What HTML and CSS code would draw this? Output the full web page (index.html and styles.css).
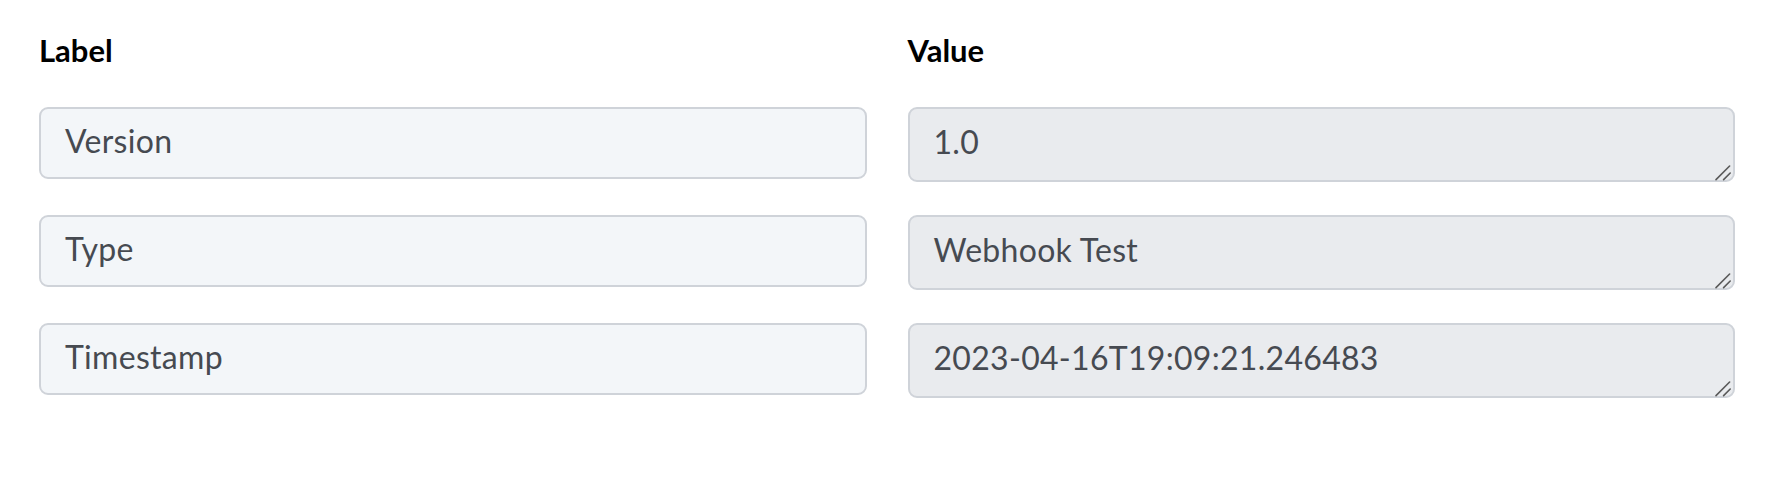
FILE: index.html
```html
<!DOCTYPE html>
<html lang="en">
<head>
<meta charset="utf-8">
<title>Label / Value</title>
<link rel="stylesheet" href="styles.css">
</head>
<body>
<div class="page">
  <div class="grid head">
    <div class="heading">Label</div>
    <div class="heading">Value</div>
  </div>
  <div class="grid rows">
    <div class="field">Version</div>
    <div class="value-wrap">
      <textarea class="value" readonly>1.0</textarea>
      <svg class="grip" width="18" height="18" viewBox="0 0 18 18" aria-hidden="true"><path d="M1 16.6 L14.6 3 M8.6 16.6 L15.2 10" /></svg>
    </div>
    <div class="field">Type</div>
    <div class="value-wrap">
      <textarea class="value" readonly>Webhook Test</textarea>
      <svg class="grip" width="18" height="18" viewBox="0 0 18 18" aria-hidden="true"><path d="M1 16.6 L14.6 3 M8.6 16.6 L15.2 10" /></svg>
    </div>
    <div class="field">Timestamp</div>
    <div class="value-wrap">
      <textarea class="value" readonly>2023-04-16T19:09:21.246483</textarea>
      <svg class="grip" width="18" height="18" viewBox="0 0 18 18" aria-hidden="true"><path d="M1 16.6 L14.6 3 M8.6 16.6 L15.2 10" /></svg>
    </div>
  </div>
</div>
</body>
</html>
```
FILE: styles.css
```css
html, body {
  margin: 0;
  padding: 0;
  background: #ffffff;
}

.page {
  padding: 32px 37px 0 39px;
  font-family: "Lato", "Noto Sans", sans-serif;
}

.grid {
  display: grid;
  grid-template-columns: 1fr 1fr;
  column-gap: 41px;
  align-items: start;
}

.head {
  margin-bottom: 39px;
}

.rows {
  row-gap: 33px;
}

.heading {
  font-size: 31px;
  line-height: 36px;
  font-weight: 700;
  color: #000000;
}

.field,
.value {
  box-sizing: border-box;
  margin: 0;
  width: 100%;
  border: 2px solid #cfd3d9;
  border-radius: 9px;
  font-family: "Lato", "Noto Sans", sans-serif;
  font-size: 32px;
  line-height: 38px;
  letter-spacing: 0.3px;
  color: #464a51;
  padding-left: 24px;
  padding-right: 24px;
}

.field {
  height: 72px;
  padding-top: 13px;
  padding-bottom: 17px;
  background: #f3f6f9;
}

.value-wrap {
  position: relative;
}

.value {
  display: block;
  height: 75px;
  padding-top: 14px;
  padding-bottom: 19px;
  background: #e9ebee;
  resize: none;
  overflow: hidden;
  outline: none;
}

.grip {
  position: absolute;
  right: 2px;
  bottom: 1px;
  fill: none;
  stroke: #5a5a5a;
  stroke-width: 1.6;
  stroke-linecap: round;
}
```
